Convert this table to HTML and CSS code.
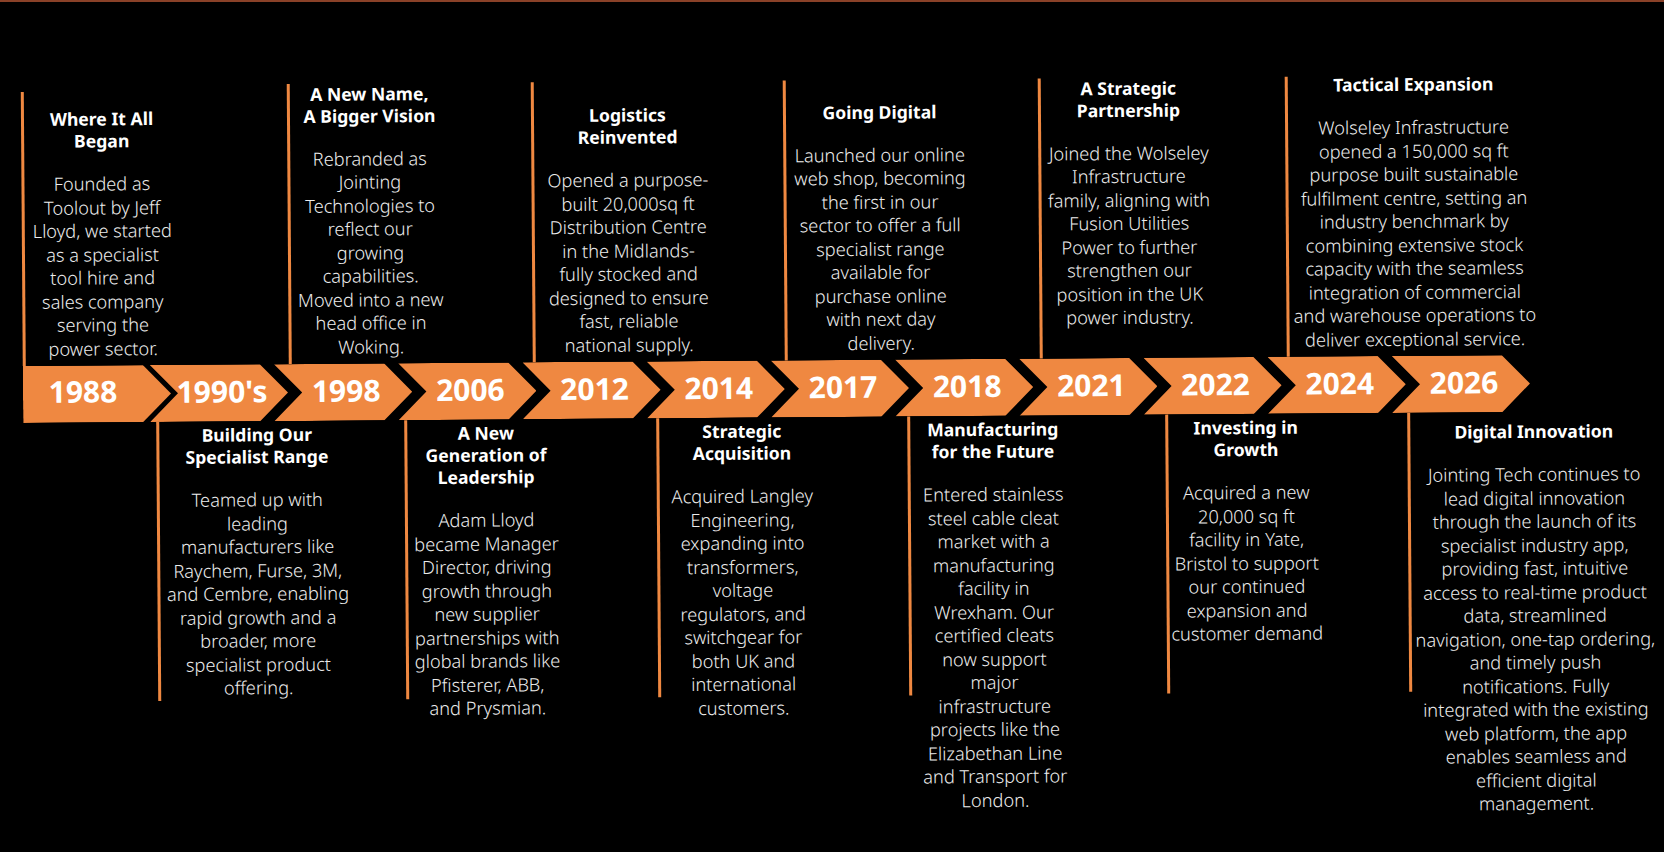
FILE: index.html
```html
<!DOCTYPE html>
<html lang="en">
<head>
<meta charset="utf-8">
<title>Our Journey</title>
<link rel="stylesheet" href="styles.css">
</head>
<body>
<div class="topline"></div>
<main class="stage">
  <section class="row row-top">
    <article class="event up e1988">
      <h2 class="title">Where It All<br>Began</h2>
      <p class="desc">Founded as<br>Toolout by Jeff<br>Lloyd, we started<br>as a specialist<br>tool hire and<br>sales company<br>serving the<br>power sector.</p>
    </article>
    <article class="event up e1998">
      <h2 class="title">A New Name,<br>A Bigger Vision</h2>
      <p class="desc">Rebranded as<br>Jointing<br>Technologies to<br>reflect our<br>growing<br>capabilities.<br>Moved into a new<br>head office in<br>Woking.</p>
    </article>
    <article class="event up e2012">
      <h2 class="title">Logistics<br>Reinvented</h2>
      <p class="desc">Opened a purpose-<br>built 20,000sq ft<br>Distribution Centre<br>in the Midlands-<br>fully stocked and<br>designed to ensure<br>fast, reliable<br>national supply.</p>
    </article>
    <article class="event up e2017">
      <h2 class="title">Going Digital</h2>
      <p class="desc">Launched our online<br>web shop, becoming<br>the first in our<br>sector to offer a full<br>specialist range<br>available for<br>purchase online<br>with next day<br>delivery.</p>
    </article>
    <article class="event up e2021">
      <h2 class="title">A Strategic<br>Partnership</h2>
      <p class="desc">Joined the Wolseley<br>Infrastructure<br>family, aligning with<br>Fusion Utilities<br>Power to further<br>strengthen our<br>position in the UK<br>power industry.</p>
    </article>
    <article class="event up e2024">
      <h2 class="title">Tactical Expansion</h2>
      <p class="desc">Wolseley Infrastructure<br>opened a 150,000 sq ft<br>purpose built sustainable<br>fulfilment centre, setting an<br>industry benchmark by<br>combining extensive stock<br>capacity with the seamless<br>integration of commercial<br>and warehouse operations to<br>deliver exceptional service.</p>
    </article>
  </section>

  <section class="band">
    <div class="chev first">1988</div>
    <div class="chev">1990's</div>
    <div class="chev">1998</div>
    <div class="chev">2006</div>
    <div class="chev">2012</div>
    <div class="chev">2014</div>
    <div class="chev">2017</div>
    <div class="chev">2018</div>
    <div class="chev">2021</div>
    <div class="chev">2022</div>
    <div class="chev">2024</div>
    <div class="chev">2026</div>
  </section>

  <section class="row row-bottom">
    <article class="event down e1990">
      <h2 class="title">Building Our<br>Specialist Range</h2>
      <p class="desc">Teamed up with<br>leading<br>manufacturers like<br>Raychem, Furse, 3M,<br>and Cembre, enabling<br>rapid growth and a<br>broader, more<br>specialist product<br>offering.</p>
    </article>
    <article class="event down e2006">
      <h2 class="title">A New<br>Generation of<br>Leadership</h2>
      <p class="desc">Adam Lloyd<br>became Manager<br>Director, driving<br>growth through<br>new supplier<br>partnerships with<br>global brands like<br>Pfisterer, ABB,<br>and Prysmian.</p>
    </article>
    <article class="event down e2014">
      <h2 class="title">Strategic<br>Acquisition</h2>
      <p class="desc">Acquired Langley<br>Engineering,<br>expanding into<br>transformers,<br>voltage<br>regulators, and<br>switchgear for<br>both UK and<br>international<br>customers.</p>
    </article>
    <article class="event down e2018">
      <h2 class="title">Manufacturing<br>for the Future</h2>
      <p class="desc">Entered stainless<br>steel cable cleat<br>market with a<br>manufacturing<br>facility in<br>Wrexham. Our<br>certified cleats<br>now support<br>major<br>infrastructure<br>projects like the<br>Elizabethan Line<br>and Transport for<br>London.</p>
    </article>
    <article class="event down e2022">
      <h2 class="title">Investing in<br>Growth</h2>
      <p class="desc">Acquired a new<br>20,000 sq ft<br>facility in Yate,<br>Bristol to support<br>our continued<br>expansion and<br>customer demand</p>
    </article>
    <article class="event down e2026">
      <h2 class="title">Digital Innovation</h2>
      <p class="desc">Jointing Tech continues to<br>lead digital innovation<br>through the launch of its<br>specialist industry app,<br>providing fast, intuitive<br>access to real-time product<br>data, streamlined<br>navigation, one-tap ordering,<br>and timely push<br>notifications. Fully<br>integrated with the existing<br>web platform, the app<br>enables seamless and<br>efficient digital<br>management.</p>
    </article>
  </section>
</main>
</body>
</html>
```

FILE: styles.css
```css
html, body {
  margin: 0;
  padding: 0;
  background: #000;
  overflow: hidden;
}

body {
  width: 1664px;
  height: 852px;
  font-family: "Noto Sans", "Open Sans", "DejaVu Sans", sans-serif;
  color: #ececec;
}

.topline {
  height: 2px;
  background: #8a4128;
}

.stage {
  height: 850px;
  transform: rotate(-0.42deg);
  transform-origin: 23px 393px;
}

.row {
  display: flex;
}

.row-top {
  height: 364px;
  align-items: flex-end;
}

.row-bottom {
  align-items: flex-start;
}

.event {
  flex: none;
  box-sizing: border-box;
  border-left: 3px solid #ef8841;
  text-align: center;
  display: flex;
  flex-direction: column;
}

.up {
  height: 280px;
  justify-content: flex-end;
  padding-bottom: 5px;
}

.down {
  height: 279px;
  justify-content: flex-start;
  padding-top: 2px;
}

.title {
  margin: 0 0 21px;
  font-size: 17.6px;
  line-height: 22px;
  font-weight: 700;
  color: #ffffff;
  white-space: nowrap;
}

.desc {
  margin: 0;
  font-size: 18.2px;
  line-height: 23.5px;
  font-weight: 300;
  white-space: nowrap;
}

/* top events */
.e1988 { margin-left: 23px; width: 158px; height: 274px; }
.e1998 { margin-left: 108px; width: 162px; }
.e2012 { margin-left: 82px; width: 190px; }
.e2017 { margin-left: 62px; width: 190px; }
.e2021 { margin-left: 65px; width: 178px; padding-bottom: 28.5px; }
.e2024 { margin-left: 69px; width: 254px; }

/* bottom events */
.e1990 { margin-left: 156px; width: 198px; }
.e2006 { margin-left: 50px; width: 160px; }
.e2014 { margin-left: 92px; width: 168px; }
.e2018 { margin-left: 83px; width: 168px; }
.e2022 { margin-left: 90px; width: 158px; }
.e2026 { margin-left: 84px; width: 250px; padding-top: 8px; }

/* chevron band */
.band {
  display: flex;
  height: 57px;
  padding-left: 23px;
}

.chev {
  flex: none;
  box-sizing: border-box;
  width: 138px;
  height: 57px;
  margin-left: -13.8px;
  padding: 0 28px 3px 34px;
  background: #ef8841;
  clip-path: polygon(0 0, 110px 0, 138px 50%, 110px 100%, 0 100%, 28px 50%);
  display: flex;
  align-items: center;
  justify-content: center;
  color: #ffffff;
  font-size: 30px;
  line-height: 1;
  font-weight: 700;
  white-space: nowrap;
}

.chev.first {
  width: 148px;
  margin-left: 0;
  padding: 0 28px 5px 0;
  clip-path: polygon(0 0, 120px 0, 148px 50%, 120px 100%, 0 100%);
}

.chev.first + .chev {
  margin-left: -21px;
}
```
